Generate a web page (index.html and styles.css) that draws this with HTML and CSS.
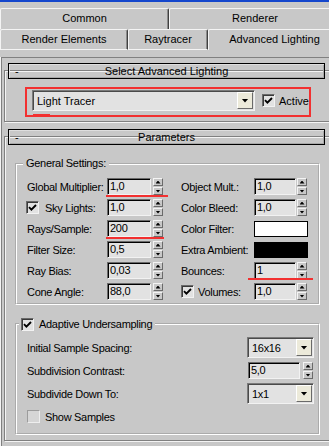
FILE: index.html
```html
<!DOCTYPE html>
<html>
<head>
    <link rel="stylesheet" href="styles.css">
</head>
<body>
    <div class="window">
        <div class="titlebar"></div>

        <div class="tabs">
            <div class="tab-row">
                <div class="tab tab-common">Common</div>
                <div class="tab tab-renderer">Renderer</div>
            </div>
            <div class="tab-row lower">
                <div class="tab tab-elements">Render Elements</div>
                <div class="tab tab-raytracer">Raytracer</div>
                <div class="tab tab-advanced active">Advanced Lighting</div>
            </div>
        </div>

        <div class="page">
            <div class="rollouts">

                <div class="rollout">
                    <div class="rollout-head"><span class="minus">-</span><span>Select Advanced Lighting</span></div>
                    <div class="highlight">
                        <div class="dropdown wide">
                            <span class="drop-text">Light Tracer</span>
                            <span class="drop-btn"></span>
                        </div>
                        <label class="check active-check">
                            <span class="box"><svg width="11" height="11" viewBox="0 0 11 11"><path d="M2 5.2l2.4 2.4L9 3" fill="none" stroke="#000" stroke-width="1.9"/></svg></span>
                            Active
                        </label>
                    </div>
                </div>

                <div class="rollout params">
                    <div class="rollout-head"><span class="minus">-</span><span>Parameters</span></div>

                    <fieldset class="group general">
                        <legend>General Settings:</legend>
                        <div class="settings">
                            <span class="label">Global Multiplier:</span>
                            <div class="spin mark mark-global">
                                <span class="field">1,0</span>
                                <span class="arrows"><i class="up"></i><i class="down"></i></span>
                            </div>
                            <span class="label">Object Mult.:</span>
                            <div class="spin narrow">
                                <span class="field">1,0</span>
                                <span class="arrows"><i class="up"></i><i class="down"></i></span>
                            </div>

                            <label class="check sky">
                                <span class="box"><svg width="11" height="11" viewBox="0 0 11 11"><path d="M2 5.2l2.4 2.4L9 3" fill="none" stroke="#000" stroke-width="1.9"/></svg></span>
                                Sky Lights:
                            </label>
                            <div class="spin">
                                <span class="field">1,0</span>
                                <span class="arrows"><i class="up"></i><i class="down"></i></span>
                            </div>
                            <span class="label">Color Bleed:</span>
                            <div class="spin narrow">
                                <span class="field">1,0</span>
                                <span class="arrows"><i class="up"></i><i class="down"></i></span>
                            </div>

                            <span class="label">Rays/Sample:</span>
                            <div class="spin mark mark-rays">
                                <span class="field">200</span>
                                <span class="arrows"><i class="up"></i><i class="down"></i></span>
                            </div>
                            <span class="label">Color Filter:</span>
                            <span class="swatch white"></span>

                            <span class="label">Filter Size:</span>
                            <div class="spin">
                                <span class="field">0,5</span>
                                <span class="arrows"><i class="up"></i><i class="down"></i></span>
                            </div>
                            <span class="label">Extra Ambient:</span>
                            <span class="swatch black"></span>

                            <span class="label">Ray Bias:</span>
                            <div class="spin">
                                <span class="field">0,03</span>
                                <span class="arrows"><i class="up"></i><i class="down"></i></span>
                            </div>
                            <span class="label">Bounces:</span>
                            <div class="spin narrow mark mark-bounces">
                                <span class="field">1</span>
                                <span class="arrows"><i class="up"></i><i class="down"></i></span>
                            </div>

                            <span class="label">Cone Angle:</span>
                            <div class="spin">
                                <span class="field">88,0</span>
                                <span class="arrows"><i class="up"></i><i class="down"></i></span>
                            </div>
                            <label class="check volumes">
                                <span class="box"><svg width="11" height="11" viewBox="0 0 11 11"><path d="M2 5.2l2.4 2.4L9 3" fill="none" stroke="#000" stroke-width="1.9"/></svg></span>
                                Volumes:
                            </label>
                            <div class="spin narrow">
                                <span class="field">1,0</span>
                                <span class="arrows"><i class="up"></i><i class="down"></i></span>
                            </div>
                        </div>
                    </fieldset>

                    <fieldset class="group adaptive">
                        <legend>
                            <span class="box"><svg width="11" height="11" viewBox="0 0 11 11"><path d="M2 5.2l2.4 2.4L9 3" fill="none" stroke="#000" stroke-width="1.9"/></svg></span>
                            Adaptive Undersampling
                        </legend>
                        <div class="opt-row">
                            <span class="label">Initial Sample Spacing:</span>
                            <div class="dropdown small">
                                <span class="drop-text">16x16</span>
                                <span class="drop-btn"></span>
                            </div>
                        </div>
                        <div class="opt-row">
                            <span class="label">Subdivision Contrast:</span>
                            <div class="spin wide">
                                <span class="field">5,0</span>
                                <span class="arrows"><i class="up"></i><i class="down"></i></span>
                            </div>
                        </div>
                        <div class="opt-row">
                            <span class="label">Subdivide Down To:</span>
                            <div class="dropdown small">
                                <span class="drop-text">1x1</span>
                                <span class="drop-btn"></span>
                            </div>
                        </div>
                        <div class="opt-row">
                            <label class="check samples">
                                <span class="box off"></span>
                                Show Samples
                            </label>
                        </div>
                    </fieldset>
                </div>

            </div>
        </div>
    </div>
</body>
</html>
```

FILE: styles.css
```css
body {
    margin: 0;
    background: #c8c8c8;
    font-family: 'Liberation Sans', Arial, sans-serif;
    font-size: 11px;
    color: #000;
    overflow: hidden;
}

.window {
    width: 341px;
    height: 446px;
}

.titlebar {
    height: 2px;
    background: #1446cc;
}

/* Tabs */

.tabs {
    margin-top: 6px;
}

.tab-row {
    display: flex;
    align-items: flex-start;
}

.tab {
    box-sizing: border-box;
    height: 21px;
    line-height: 18px;
    text-align: center;
    white-space: nowrap;
    border-top: 1px solid #f4f4f4;
    border-left: 1px solid #f4f4f4;
    border-right: 1px solid #404040;
    border-radius: 2px 2px 0 0;
    box-shadow: inset -1px 0 0 #8a8a8a;
}

.tab-row.lower .tab {
    border-bottom: 1px solid #f4f4f4;
}

.tab-row.lower .tab.active {
    border-bottom: none;
}

.tab-common { width: 169px; }
.tab-renderer { width: 172px; }
.tab-elements { width: 128px; }
.tab-raytracer { width: 80px; }
.tab-advanced { width: 133px; }

/* Page + rollouts */

.page {
    border-left: 1px solid #f4f4f4;
    height: 397px;
}

.rollouts {
    margin-top: 7px;
    border-top: 1px solid #808080;
    border-left: 1px solid #808080;
    padding-left: 2px;
    height: 390px;
}

.rollout {
    margin: 12px 0 0 0;
    border: 1px solid #808080;
    box-shadow: inset 1px 1px 0 #f4f4f4, 1px 1px 0 #f4f4f4;
    letter-spacing: -0.3px;
}

.rollout.params {
    margin-top: 14px;
}

.rollout-head {
    box-sizing: border-box;
    margin: -8px 0 0 3px;
    width: 317px;
    height: 16px;
    border: 1px solid #000;
    box-shadow: inset 1px 1px 0 #dedede, inset -1px -1px 0 #a8a8a8;
    display: grid;
    grid-template-columns: 20px 1fr 20px;
    align-items: center;
    line-height: 14px;
    text-align: center;
    letter-spacing: 0;
}

.minus {
    text-align: left;
    padding-left: 6px;
}

.label {
    white-space: nowrap;
}

/* red annotation box */
.highlight {
    position: relative;
    box-sizing: border-box;
    width: 286px;
    margin: 8px 0 4px 20px;
    padding: 1px 0 4px 5px;
    border: 2px solid #f23030;
    display: flex;
    align-items: center;
    letter-spacing: 0;
}

.highlight::after {
    content: '';
    position: absolute;
    left: 6px;
    bottom: 0;
    width: 17px;
    height: 1px;
    background: #f23030;
}

/* Controls */

.field {
    box-sizing: border-box;
    flex: 1;
    height: 17px;
    line-height: 15px;
    padding-left: 2px;
    background: #e2e2e2;
    border: 1px solid;
    border-color: #6a6a6a #f2f2f2 #f2f2f2 #6a6a6a;
    box-shadow: inset 1px 1px 0 #000;
}

.spin {
    position: relative;
    display: flex;
    gap: 2px;
    width: 56px;
    height: 17px;
}

.spin.narrow {
    width: 53px;
    gap: 1px;
}

.spin.wide {
    width: 65px;
    gap: 3px;
    margin-left: auto;
    margin-right: 1px;
}

.arrows {
    width: 10px;
    display: flex;
    flex-direction: column;
    gap: 1px;
}

.arrows i {
    box-sizing: border-box;
    height: 8px;
    display: flex;
    align-items: center;
    justify-content: center;
    border: 1px solid;
    border-color: #f4f4f4 #6a6a6a #6a6a6a #f4f4f4;
}

.arrows i::before {
    content: '';
    width: 5px;
    height: 3px;
    background: #000;
}

.arrows .up::before {
    clip-path: polygon(50% 0, 100% 100%, 0 100%);
}

.arrows .down::before {
    clip-path: polygon(0 0, 100% 0, 50% 100%);
}

/* red underline marks */
.mark::after {
    content: '';
    position: absolute;
    left: -1px;
    height: 2px;
    background: #f23030;
}

.mark-global::after { right: -5px; bottom: -2px; }
.mark-rays::after { right: -1px; bottom: -2px; }
.mark-bounces::after { left: -6px; right: -6px; bottom: -1px; }

.dropdown {
    box-sizing: border-box;
    height: 21px;
    display: flex;
    align-items: center;
    background: #e2e2e2;
    border: 1px solid;
    border-color: #7a7a7a #f2f2f2 #f2f2f2 #7a7a7a;
    box-shadow: inset 1px 1px 0 #4a4a4a;
}

.dropdown.wide {
    width: 223px;
}

.dropdown.small {
    width: 67px;
    margin-left: auto;
}

.drop-text {
    flex: 1;
    padding-left: 4px;
}

.drop-btn {
    box-sizing: border-box;
    width: 16px;
    height: 17px;
    margin-right: 1px;
    background: #eceada;
    border: 1px solid;
    border-color: #ffffff #6a6a6a #6a6a6a #ffffff;
    display: flex;
    align-items: center;
    justify-content: center;
}

.drop-btn::before {
    content: '';
    width: 7px;
    height: 4px;
    background: #000;
    clip-path: polygon(0 0, 100% 0, 50% 100%);
}

.check {
    display: flex;
    align-items: center;
    gap: 5px;
    white-space: nowrap;
}

.box {
    box-sizing: border-box;
    flex: none;
    width: 13px;
    height: 13px;
    background: #e2e2e2;
    border: 1px solid;
    border-color: #6a6a6a #f2f2f2 #f2f2f2 #6a6a6a;
    box-shadow: inset 1px 1px 0 #3a3a3a;
    display: flex;
}

.box.off {
    background: #d6d6d6;
    border-color: #9c9c9c #eeeeee #eeeeee #9c9c9c;
    box-shadow: none;
}

.active-check {
    margin-left: 7px;
    gap: 4px;
}

.swatch {
    box-sizing: border-box;
    width: 54px;
    height: 16px;
    border: 1px solid #000;
}

.swatch.white { background: #fff; }
.swatch.black { background: #000; }

/* Group boxes */

.group {
    box-sizing: border-box;
    width: 305px;
    margin: 12px 0 0 10px;
    padding: 0;
    border: 2px groove #fff;
}

.group legend {
    line-height: 13px;
    margin-left: 6px;
    padding: 0 3px;
}

.settings {
    display: grid;
    grid-template-columns: 80px 74px 73px 54px;
    grid-auto-rows: 21px;
    align-items: center;
    padding: 6px 0 1px 10px;
}

.sky {
    margin-left: -1px;
    gap: 6px;
}

.volumes {
    gap: 4px;
}

.group.adaptive {
    margin: 12px 0 5px 10px;
}

.adaptive legend {
    display: flex;
    align-items: center;
    gap: 5px;
    height: 14px;
    margin-left: 2px;
    padding: 0 3px 0 2px;
}

.adaptive .opt-row:first-of-type {
    margin-top: 5px;
}

.opt-row {
    display: flex;
    align-items: center;
    height: 23px;
    padding: 0 4px 0 10px;
}

.opt-row:last-child {
    margin-bottom: 5px;
}
```
